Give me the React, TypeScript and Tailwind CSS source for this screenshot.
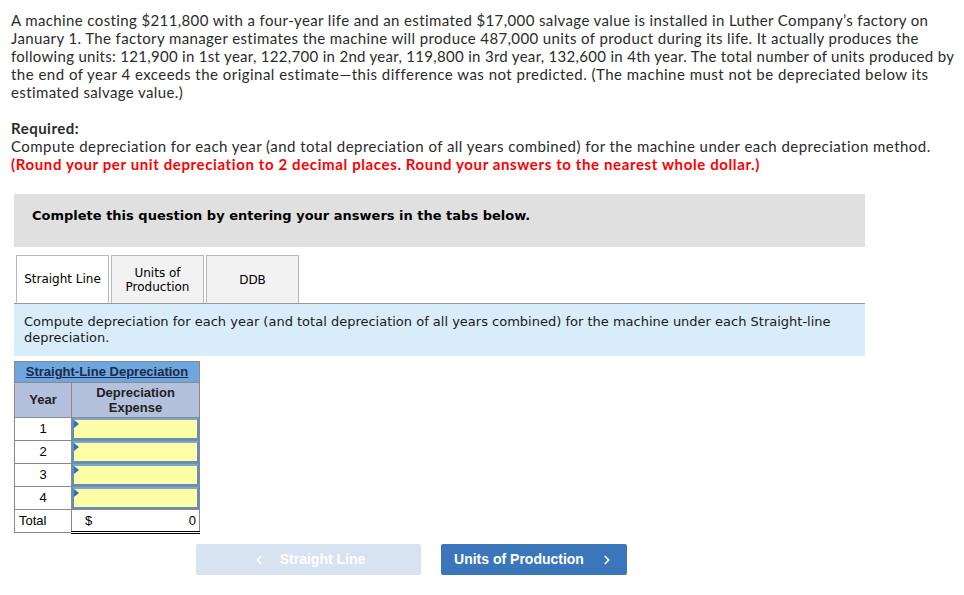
import { ChevronLeft, ChevronRight } from 'lucide-react';

const rows = [1, 2, 3, 4];

const Tab = ({ label, active }: { label: React.ReactNode; active?: boolean }) => (
  <div
    className={`w-[93px] h-[48px] flex items-center justify-center text-center text-[12px] leading-[14px] border border-[#b8b8b8] ${
      active ? 'bg-white border-b-white -mb-px z-10 relative' : 'bg-[#f2f2f2] border-b-0'
    }`}
  >
    {label}
  </div>
);

export default function App() {
  return (
    <div className="w-[964px] h-[595px] bg-white text-[#222] overflow-hidden">
      <div className="pl-[11px] pt-[11px] whitespace-nowrap font-['Lato','Open_Sans',sans-serif] text-[15px] leading-[18px] tracking-[0.38px] text-[#2b2b2b]">
        <p>
          A machine costing $211,800 with a four-year life and an estimated $17,000 salvage value is installed in Luther Company’s factory on
          <br />
          January 1. The factory manager estimates the machine will produce 487,000 units of product during its life. It actually produces the
          <br />
          <span className="tracking-[0.3px]">
            following units: 121,900 in 1st year, 122,700 in 2nd year, 119,800 in 3rd year, 132,600 in 4th year. The total number of units produced by
          </span>
          <br />
          <span className="tracking-[0.48px]">
            the end of year 4 exceeds the original estimate—this difference was not predicted. (The machine must not be depreciated below its
          </span>
          <br />
          estimated salvage value.)
        </p>
        <p className="mt-[18px] font-bold tracking-[0.5px]">Required:</p>
        <p className="tracking-[0.46px]">
          Compute depreciation for each year (and total depreciation of all years combined) for the machine under each depreciation method.
        </p>
        <p className="font-bold text-[#ff0000] tracking-[0.62px]">
          (Round your per unit depreciation to 2 decimal places. Round your answers to the nearest whole dollar.)
        </p>
      </div>

      <div className="ml-[14px] w-[851px] font-['DejaVu_Sans','Verdana',sans-serif]">
        <div className="mt-[21px] h-[53px] bg-[#e0e0e0] pl-[18px] pt-[14px] text-[13px] leading-[16px] font-bold text-black">
          Complete this question by entering your answers in the tabs below.
        </div>

        <div className="mt-[8px] pl-[2px] flex gap-[2px] text-black">
          <Tab label="Straight Line" active />
          <Tab
            label={
              <span>
                Units of
                <br />
                Production
              </span>
            }
          />
          <Tab label="DDB" />
        </div>
        <div className="border-t border-[#9a9a9a] bg-[#d9ecf9] h-[53px] pl-[10px] pt-[10px] text-[13px] leading-[16px] text-[#1a1a1a]">
          Compute depreciation for each year (and total depreciation of all years combined) for the machine under each Straight-line
          <br />
          depreciation.
        </div>
      </div>

      <table className="ml-[14px] mt-[5px] w-[186px] border-collapse font-['Liberation_Sans',Arial,sans-serif] text-[13px] text-black">
        <thead>
          <tr>
            <th colSpan={2} className="h-[21px] bg-[#6fa6e0] border border-[#8a8a8a] font-bold underline text-[#1a2a4a] p-0">
              Straight-Line Depreciation
            </th>
          </tr>
          <tr className="bg-[#b3c1dc]">
            <th className="w-[57px] h-[35px] border border-[#8a8a8a] font-bold p-0 text-[#222]">Year</th>
            <th className="border border-[#8a8a8a] font-bold leading-[15px] p-0 text-[#222]">
              Depreciation
              <br />
              Expense
            </th>
          </tr>
        </thead>
        <tbody>
          {rows.map((r) => (
            <tr key={r}>
              <td className="h-[23px] border border-[#8a8a8a] text-center p-0">{r}</td>
              <td className="border border-[#8a8a8a] p-0">
                <div className="relative h-[22px] bg-[#ffffa6] border-2 border-[#5d8fc4] border-t-[#7aa5d6]">
                  <span className="absolute left-0 top-0 w-0 h-0 border-t-[4px] border-b-[4px] border-l-[5px] border-t-transparent border-b-transparent border-l-[#2f6fc0]" />
                </div>
              </td>
            </tr>
          ))}
          <tr>
            <td className="h-[23px] border border-[#8a8a8a] pl-[4px] p-0">Total</td>
            <td className="border border-[#8a8a8a] border-b-[3px] border-b-black border-double p-0">
              <div className="flex justify-between pl-[13px] pr-[3px]">
                <span>$</span>
                <span>0</span>
              </div>
            </td>
          </tr>
        </tbody>
      </table>

      <div className="mt-[10px] ml-[196px] flex gap-[20px] font-['Liberation_Sans',Arial,sans-serif] text-[14px] font-bold">
        <button className="w-[225px] h-[31px] rounded-[2px] bg-[#d7e3f1] text-white flex items-center justify-center gap-[14px]">
          <ChevronLeft size={14} strokeWidth={3} />
          <span>Straight Line</span>
        </button>
        <button className="w-[186px] h-[31px] rounded-[2px] bg-[#3a76b9] text-white flex items-center justify-center gap-[16px]">
          <span>Units of Production</span>
          <ChevronRight size={14} strokeWidth={3} />
        </button>
      </div>
    </div>
  );
}
